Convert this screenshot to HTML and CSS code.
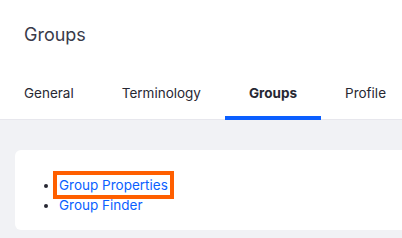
FILE: index.html
```html
<!DOCTYPE html>
<html lang="en">
<head>
  <meta charset="UTF-8">
  <title>Groups</title>
  <link rel="stylesheet" href="styles.css">
</head>
<body>
  <header class="page-header">
    <h1 class="page-title">Groups</h1>
    <nav class="tabs">
      <a class="tab" href="#">General</a>
      <a class="tab" href="#">Terminology</a>
      <a class="tab active" href="#">Groups</a>
      <a class="tab" href="#">Profile</a>
    </nav>
  </header>

  <main class="content">
    <div class="card">
      <ul class="link-list">
        <li><a class="highlight" href="#">Group Properties</a></li>
        <li><a href="#">Group Finder</a></li>
      </ul>
    </div>
  </main>
</body>
</html>
```

FILE: styles.css
```css
html, body {
  height: 100%;
}
body {
  margin: 0;
  font-family: Inter, "Noto Sans", sans-serif;
  background-color: #f1f2f5;
  color: #272833;
  overflow: hidden;
}
.page-header {
  background-color: #ffffff;
  border-bottom: 1px solid #e7e7ed;
}
.page-title {
  margin: 0;
  padding: 23px 24px 0;
  font-size: 18px;
  font-weight: 400;
  line-height: 24px;
  color: #393a4a;
}
.tabs {
  display: flex;
  margin-top: 29px;
  white-space: nowrap;
}
.tab {
  padding: 0 24px 6px;
  font-size: 13.5px;
  line-height: 34px;
  color: #272833;
  text-decoration: none;
  border-bottom: 4px solid transparent;
  margin-bottom: -1px;
}
.tab.active {
  font-weight: 700;
  border-bottom-color: #0b5fff;
}
.content {
  padding: 30px 0 0 15px;
}
.card {
  background-color: #ffffff;
  border-radius: 6px 0 0 6px;
  margin-right: -20px;
  padding: 25px 0 15px;
}
.link-list {
  margin: 0;
  padding-left: 44px;
  font-size: 13.5px;
  line-height: 20px;
}
.link-list a {
  color: #0b5fff;
  text-decoration: none;
}
.link-list a.highlight {
  outline: 4px solid #ff5f00;
  outline-offset: 2px;
}
```
